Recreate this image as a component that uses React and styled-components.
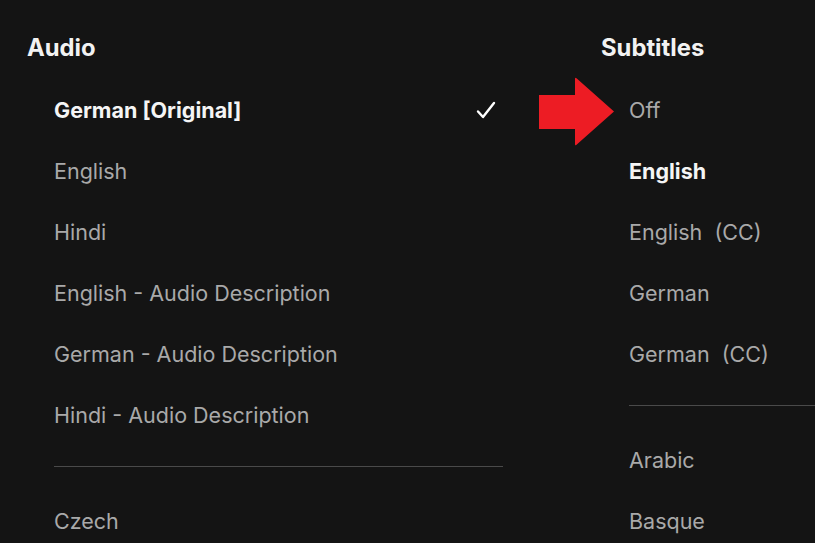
import styled, { createGlobalStyle } from "styled-components";

const GlobalStyle = createGlobalStyle`
  html, body {
    margin: 0;
    padding: 0;
    background: #141414;
    overflow: hidden;
  }
  body {
    font-family: Inter, "Liberation Sans", sans-serif;
  }
`;

const Screen = styled.div`
  position: relative;
  width: 815px;
  height: 543px;
  overflow: hidden;
  background: #141414;
  display: flex;
  padding-top: 33px;
  box-sizing: border-box;
`;

const Column = styled.div`
  display: flex;
  flex-direction: column;
  flex: ${(p) => (p.$grow ? "1" : "none")};
  width: ${(p) => p.$width || "auto"};
  padding-left: ${(p) => p.$pad || 0}px;
  box-sizing: border-box;
`;

const Header = styled.h2`
  margin: 0;
  height: 30px;
  line-height: 30px;
  font-size: 23.8px;
  font-weight: 700;
  color: #f2f2f2;
`;

const List = styled.div`
  display: flex;
  flex-direction: column;
  margin-top: 16.5px;
  margin-left: ${(p) => p.$indent}px;
`;

const Row = styled.div`
  height: 61px;
  display: flex;
  align-items: center;
  justify-content: space-between;
  font-size: 21.5px;
  font-weight: ${(p) => (p.$active ? 700 : 400)};
  color: ${(p) => (p.$active ? "#f5f5f5" : "#a9a9a9")};
  white-space: nowrap;
`;

const Divider = styled.div`
  height: 45px;
  box-sizing: border-box;
  padding-top: 20px;
  &::before {
    content: "";
    display: block;
    height: 1px;
    background: #4a4a4a;
  }
`;

const Check = styled.svg`
  width: 20px;
  height: 18px;
  margin-right: 7px;
`;

const Arrow = styled.svg`
  position: absolute;
  left: 538px;
  top: 77px;
  width: 78px;
  height: 69px;
`;

const CheckMark = () => (
  <Check viewBox="0 0 20 18">
    <path d="M2 10.5 L7 16 L18 2" fill="none" stroke="#fff" strokeWidth="2.4" strokeLinecap="round" strokeLinejoin="round" />
  </Check>
);

const audio = [
  { label: "German [Original]", active: true },
  { label: "English" },
  { label: "Hindi" },
  { label: "English - Audio Description" },
  { label: "German - Audio Description" },
  { label: "Hindi - Audio Description" },
  { divider: true },
  { label: "Czech" },
];

const subtitles = [
  { label: "Off" },
  { label: "English", active: true },
  { label: "English\u00a0 (CC)" },
  { label: "German" },
  { label: "German\u00a0 (CC)" },
  { divider: true },
  { label: "Arabic" },
  { label: "Basque" },
];

const renderItems = (items, withCheck) =>
  items.map((item, i) =>
    item.divider ? (
      <Divider key={i} />
    ) : (
      <Row key={i} $active={item.active}>
        <span>{item.label}</span>
        {withCheck && item.active && <CheckMark />}
      </Row>
    )
  );

export default function App() {
  return (
    <>
      <GlobalStyle />
      <Screen>
        <Column $width="503px" $pad={27}>
          <Header>Audio</Header>
          <List $indent={27}>{renderItems(audio, true)}</List>
        </Column>
        <Column $grow $pad={98}>
          <Header>Subtitles</Header>
          <List $indent={28}>{renderItems(subtitles, false)}</List>
        </Column>
        <Arrow viewBox="0 0 78 69">
          <path d="M1 18 L37 18 L37 2 Q37 0 38.5 1.3 L76 34.5 L38.5 67.7 Q37 69 37 67 L37 52 L1 52 Z" fill="#ed1c24" strokeLinejoin="round" />
        </Arrow>
      </Screen>
    </>
  );
}
